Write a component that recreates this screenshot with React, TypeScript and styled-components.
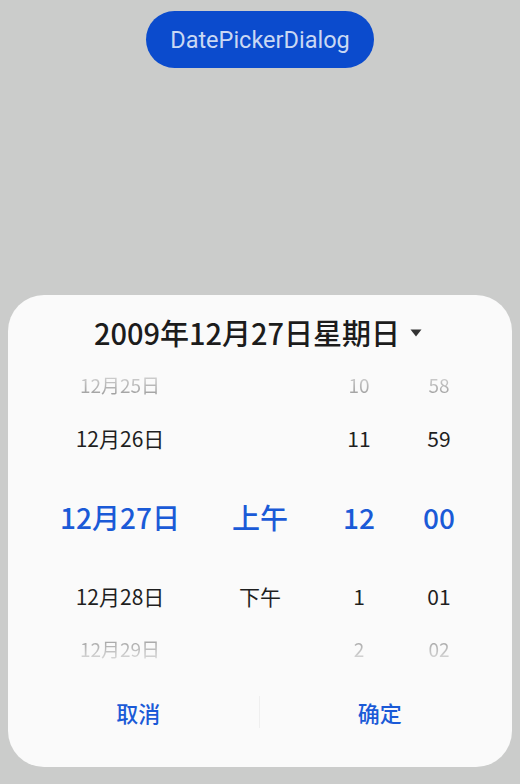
import React from "react";
import styled, { createGlobalStyle, css } from "styled-components";

const Global = createGlobalStyle`
  html, body { margin: 0; padding: 0; }
  body {
    background: #cbcccb;
    font-family: "Noto Sans CJK SC", "Noto Sans", sans-serif;
  }
`;

const Page = styled.div`
  height: 784px;
  display: flex;
  flex-direction: column;
  align-items: center;
`;

const TriggerButton = styled.button`
  margin-top: 11px;
  width: 228px;
  height: 57px;
  border: none;
  border-radius: 29px;
  background: #0b4bcd;
  color: #c9d8f3;
  font-family: Roboto, "Noto Sans", sans-serif;
  font-size: 23.5px;
  padding: 0;
`;

const Dialog = styled.div`
  margin-top: auto;
  margin-bottom: 17px;
  width: 504px;
  border-radius: 36px;
  background: #fafafa;
  display: flex;
  flex-direction: column;
`;

const TitleRow = styled.div`
  padding-top: 17px;
  height: 40px;
  display: flex;
  align-items: center;
  justify-content: center;
  gap: 10px;
  color: #1c1c1c;
  font-size: 29px;
  font-weight: 500;
  margin-bottom: 6px;
  padding-right: 4px;
`;

const Caret = styled.svg`
  width: 12px;
  height: 8px;
  margin-top: 2px;
`;

const Picker = styled.div`
  display: grid;
  grid-template-columns: 192px 88px 110px 50px;
  padding-left: 16px;
`;

const Column = styled.div`
  display: flex;
  flex-direction: column;
  align-items: center;
`;

type Kind = "top" | "near" | "selected" | "bottom";

const Cell = styled.div<{ $kind: Kind }>`
  display: flex;
  align-items: center;
  justify-content: center;
  white-space: nowrap;
  height: 53px;
  font-size: 21px;
  color: #1f1f1f;
  ${(p) =>
    p.$kind === "selected" &&
    css`
      height: 105px;
      font-size: 28px;
      font-weight: 500;
      color: #1a5ad7;
    `}
  ${(p) =>
    (p.$kind === "top" || p.$kind === "bottom") &&
    css`
      font-size: 19px;
      background: linear-gradient(
        ${p.$kind === "top" ? "to bottom" : "to top"},
        #dedede 25%,
        #9c9c9c 72%
      );
      -webkit-background-clip: text;
      background-clip: text;
      color: transparent;
    `}
`;

const Footer = styled.div`
  display: grid;
  grid-template-columns: 1fr 1px 1fr;
  align-items: center;
  height: 74px;
  padding: 0 12px 18px 10px;
`;

const Action = styled.button`
  border: none;
  background: none;
  height: 74px;
  color: #1a5ad7;
  font-family: "Noto Sans CJK SC", sans-serif;
  font-size: 22px;
  font-weight: 500;
  padding: 0;
`;

const Divider = styled.div`
  width: 1px;
  height: 32px;
  background: #efefef;
`;

const columns: { kind: Kind; text: string }[][] = [
  [
    { kind: "top", text: "12月25日" },
    { kind: "near", text: "12月26日" },
    { kind: "selected", text: "12月27日" },
    { kind: "near", text: "12月28日" },
    { kind: "bottom", text: "12月29日" },
  ],
  [
    { kind: "top", text: "" },
    { kind: "near", text: "" },
    { kind: "selected", text: "上午" },
    { kind: "near", text: "下午" },
    { kind: "bottom", text: "" },
  ],
  [
    { kind: "top", text: "10" },
    { kind: "near", text: "11" },
    { kind: "selected", text: "12" },
    { kind: "near", text: "1" },
    { kind: "bottom", text: "2" },
  ],
  [
    { kind: "top", text: "58" },
    { kind: "near", text: "59" },
    { kind: "selected", text: "00" },
    { kind: "near", text: "01" },
    { kind: "bottom", text: "02" },
  ],
];

export default function App() {
  return (
    <>
      <Global />
      <Page>
        <TriggerButton>DatePickerDialog</TriggerButton>
        <Dialog>
          <TitleRow>
            <span>2009年12月27日星期日</span>
            <Caret viewBox="0 0 12 8">
              <path d="M0.5 0.5 H11.5 L6 7.5 Z" fill="#333" />
            </Caret>
          </TitleRow>
          <Picker>
            {columns.map((col, i) => (
              <Column key={i}>
                {col.map((c, j) => (
                  <Cell key={j} $kind={c.kind}>
                    {c.text}
                  </Cell>
                ))}
              </Column>
            ))}
          </Picker>
          <Footer>
            <Action>取消</Action>
            <Divider />
            <Action>确定</Action>
          </Footer>
        </Dialog>
      </Page>
    </>
  );
}
